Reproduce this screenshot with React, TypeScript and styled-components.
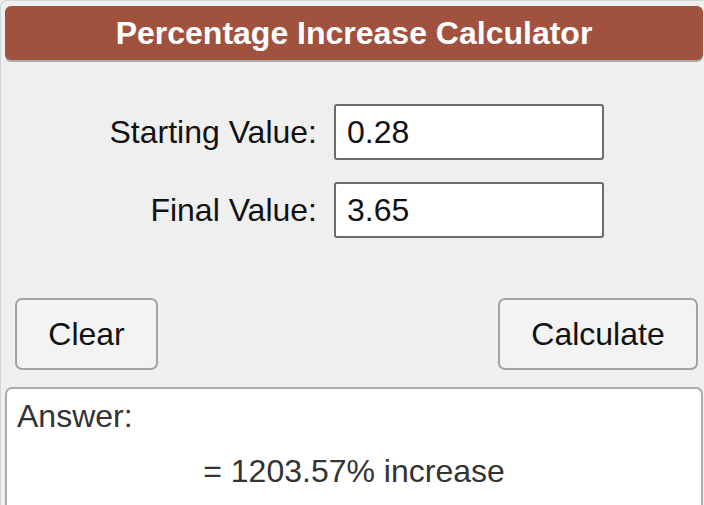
import { createGlobalStyle } from "styled-components";
import styled from "styled-components";

const Global = createGlobalStyle`
    html, body {
        margin: 0;
        padding: 0;
        background: #efefef;
        font-family: "Liberation Sans", Arial, sans-serif;
        overflow: hidden;
    }
`;

const Page = styled.div`
    width: 698px;
    padding: 5px 0 0 4px;
    display: flex;
    flex-direction: column;
    border: 1px solid #d4d4d4;
    border-right: none;
    border-bottom: none;
    border-radius: 7px 0 0 0;
`;

const Header = styled.h1`
    margin: 0;
    height: 54px;
    display: flex;
    align-items: center;
    justify-content: center;
    background: #a0523f;
    color: #fff;
    font-size: 32px;
    font-weight: bold;
    border-radius: 6px;
    box-shadow: 0 2px 0 #a9a9a9;
`;

const Form = styled.div`
    margin-top: 44px;
    display: grid;
    grid-template-columns: 312px 270px;
    column-gap: 17px;
    row-gap: 22px;
    align-items: center;
`;

const Label = styled.label`
    text-align: right;
    font-size: 32px;
    color: #111;
`;

const Input = styled.div`
    box-sizing: border-box;
    height: 56px;
    border: 2px solid #6b6b6b;
    border-radius: 3px;
    background: #fff;
    display: flex;
    align-items: center;
    padding-left: 11px;
    font-size: 32px;
    color: #111;
`;

const Buttons = styled.div`
    margin-top: 60px;
    padding: 0 5px 0 10px;
    display: flex;
    justify-content: space-between;
`;

const Button = styled.button<{ $w: number }>`
    width: ${(p) => p.$w}px;
    height: 72px;
    padding: 0;
    border: 2px solid #a3a3a3;
    border-radius: 7px;
    background: #f3f3f3;
    font-family: "Liberation Sans", Arial, sans-serif;
    font-size: 32px;
    color: #111;
`;

const Answer = styled.div`
    margin-top: 17px;
    height: 140px;
    box-sizing: border-box;
    border: 2px solid #ababab;
    border-bottom: none;
    border-radius: 7px 7px 0 0;
    background: #fff;
    padding: 9px 10px;
    color: #333;
    font-size: 32px;
`;

const Result = styled.div`
    margin-top: 18px;
    text-align: center;
`;

export default function App() {
    return (
        <>
            <Global />
            <Page>
                <Header>Percentage Increase Calculator</Header>
                <Form>
                    <Label>Starting Value:</Label>
                    <Input>0.28</Input>
                    <Label>Final Value:</Label>
                    <Input>3.65</Input>
                </Form>
                <Buttons>
                    <Button $w={143}>Clear</Button>
                    <Button $w={200}>Calculate</Button>
                </Buttons>
                <Answer>
                    Answer:
                    <Result>= 1203.57% increase</Result>
                </Answer>
            </Page>
        </>
    );
}
